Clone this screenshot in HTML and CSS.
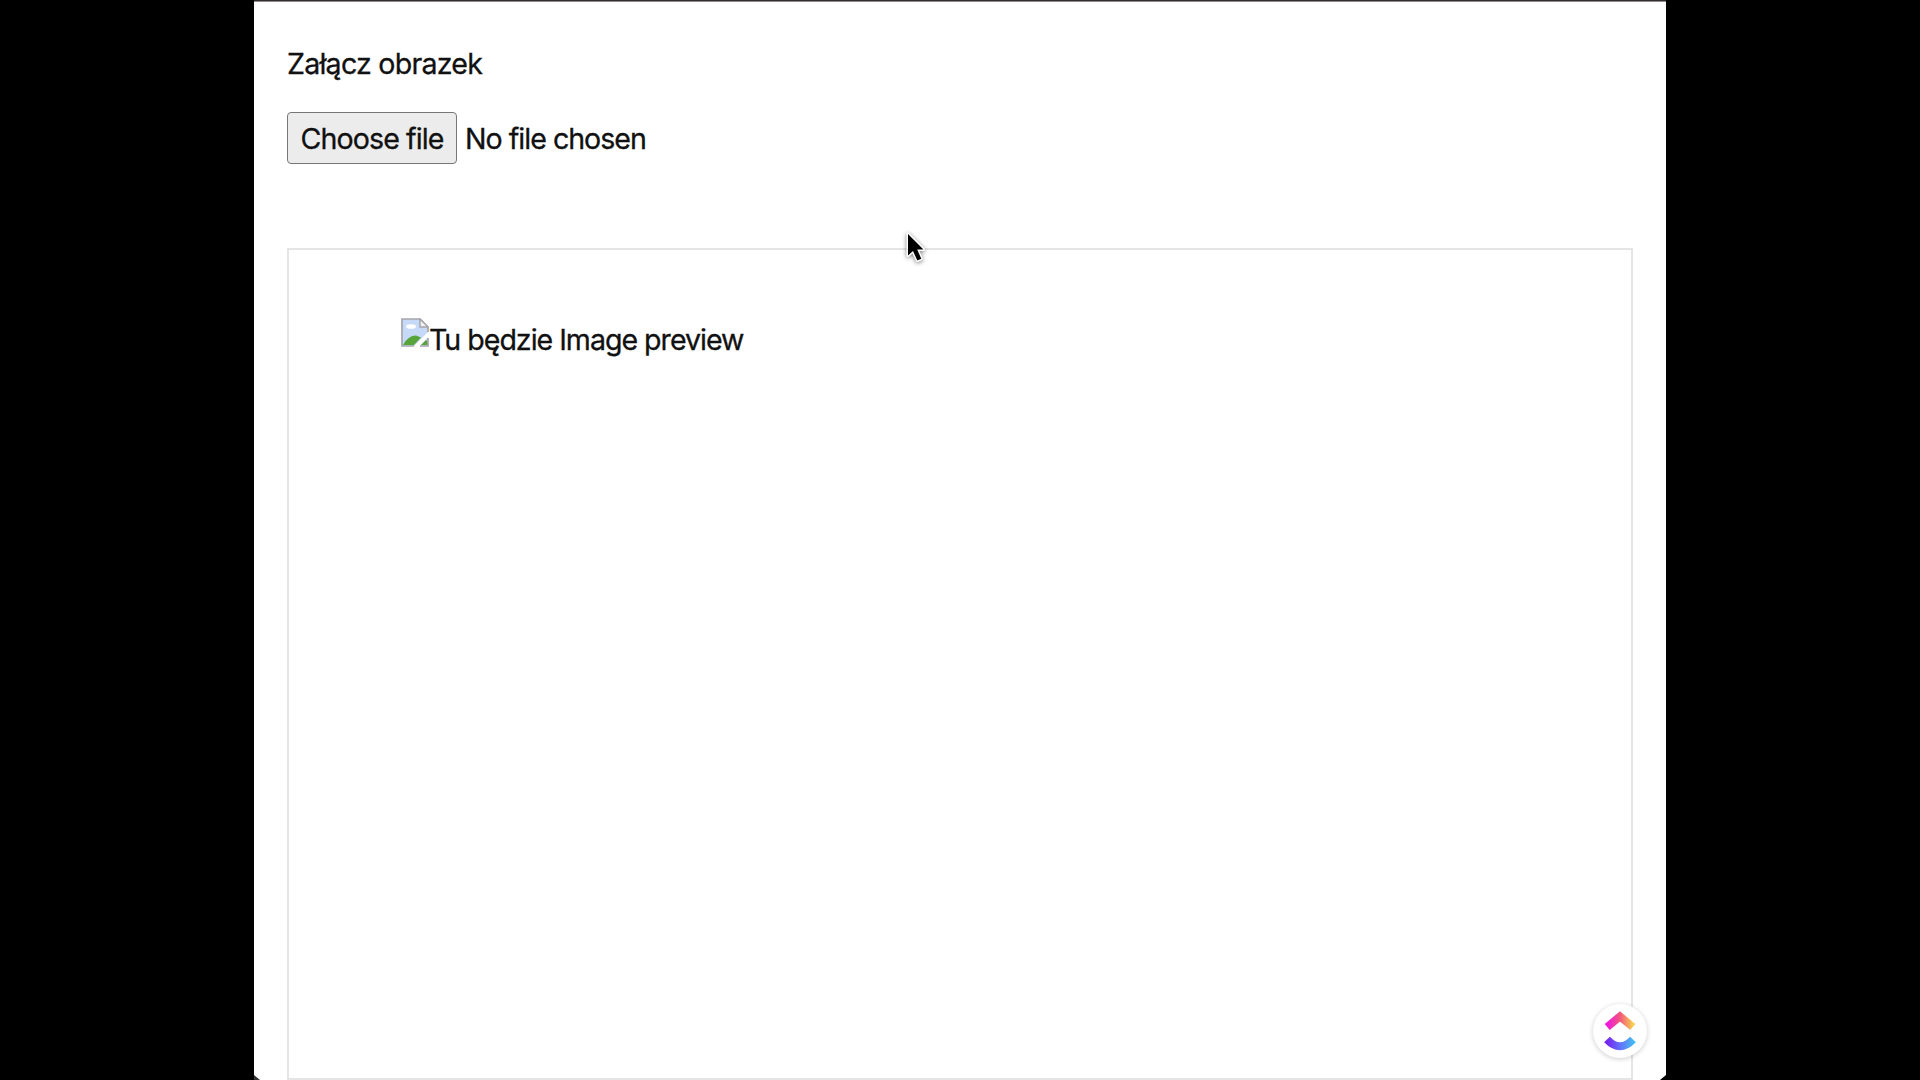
FILE: index.html
```html
<!DOCTYPE html>
<html lang="pl">
<head>
<meta charset="utf-8">
<title>Załącz obrazek</title>
<link rel="stylesheet" href="styles.css">
</head>
<body>
<main class="page">
  <div class="label"><span class="label-text">Załącz obrazek</span></div>
  <div class="file-row">
    <button class="file-button" type="button"><span class="button-text">Choose file</span></button>
    <span class="file-name">No file chosen</span>
  </div>
  <section class="preview">
    <svg class="broken" viewBox="0 0 28 29">
      <path d="M1 1H19L27 9V28H1Z" fill="#c6d9f6"/>
      <ellipse cx="10" cy="8.5" rx="5" ry="2.3" fill="#fff"/>
      <path d="M2 27Q7 17.500 15 17.500L20 19.500L13 27Z" fill="#56a43a"/>
      <path d="M28 13V18L18 29H12Z" fill="#fff"/>
      <path d="M20 27L25 22L27 24V27Z" fill="#56a43a"/>
      <path d="M13 28H1V1H19L27 9V14M19 28H27V20" fill="none" stroke="#a5a5ac" stroke-width="1.7"/>
      <path d="M19 1V9H27Z" fill="#f2f2f4" stroke="#a5a5ac" stroke-width="1.5"/>
    </svg>
    <span class="alt">Tu będzie Image preview</span>
  </section>
  <span class="corner corner-left"></span>
  <span class="corner corner-right"></span>
  <div class="badge">
    <svg class="badge-logo" viewBox="0 0 32 40">
      <defs>
        <linearGradient id="warm"><stop offset="0" stop-color="#ee18df"/><stop offset=".5" stop-color="#f2577c"/><stop offset="1" stop-color="#f6cf52"/></linearGradient>
        <linearGradient id="cool"><stop offset="0" stop-color="#7424ef"/><stop offset=".5" stop-color="#6470fb"/><stop offset="1" stop-color="#45b9ef"/></linearGradient>
      </defs>
      <path d="M3.2 16L16 5.5L28.800 16" fill="none" stroke="url(#warm)" stroke-width="8"/>
      <path d="M3 28.500Q16 42 29 28.500" fill="none" stroke="url(#cool)" stroke-width="8"/>
    </svg>
  </div>
  <svg class="cursor" viewBox="0 0 22 34">
    <path d="M3 3V24.5L8 20L12.3 29.5L16.3 27.8L12.2 18.5H18.5Z" fill="#000" stroke="#fff" stroke-width="3" stroke-linejoin="round" paint-order="stroke"/>
  </svg>
</main>
</body>
</html>
```
FILE: styles.css
```css
* { box-sizing: border-box; }

body {
  margin: 0;
  background: #000;
  height: 1080px;
  overflow: hidden;
  color: #111;
  font: 28.6px/40px Inter, "Liberation Sans", sans-serif;
  -webkit-text-stroke: 0.3px #111;
  white-space: nowrap;
}

.page {
  position: relative;
  width: 1412px;
  height: 1080px;
  margin: 0 auto;
  padding: 43px 33px 0 33px;
  background: #fff;
  border-top: 1px solid #332f30;
  box-shadow: inset 0 1px #8d8989;
  overflow: hidden;
}

.label { height: 68px; }
.label-text { letter-spacing: -0.78px; }

.file-row {
  display: flex;
  align-items: center;
  gap: 8px;
  height: 52px;
}

.file-button {
  width: 170px;
  height: 52px;
  padding: 2px 0 0;
  background: #ececec;
  border: 1.5px solid #777;
  border-radius: 4px;
  color: inherit;
  font: inherit;
}

.button-text { letter-spacing: -0.93px; }
.file-name { letter-spacing: -1px; padding-top: 2px; }

.preview {
  display: flex;
  align-items: flex-start;
  height: 832px;
  margin-top: 84px;
  padding: 68px 0 0 112px;
  border: 2px solid #e5e5e5;
}

.broken { width: 28px; height: 29px; }
.alt { letter-spacing: -1.02px; margin-top: 2px; }

.cursor {
  position: absolute;
  left: 651px;
  top: 230px;
  width: 22px;
  height: 34px;
  filter: drop-shadow(0 1px 2px rgba(0, 0, 0, .5));
}

.badge {
  position: absolute;
  left: 1339px;
  top: 1003px;
  width: 54px;
  height: 54px;
  display: flex;
  align-items: center;
  justify-content: center;
  border-radius: 50%;
  background: #fff;
  box-shadow: 0 1px 5px rgba(0, 0, 0, .2);
}

.badge-logo { width: 32px; height: 40px; }

.corner {
  position: absolute;
  bottom: 0;
  width: 6px;
  height: 5px;
  background: #333;
}

.corner-left { left: 0; clip-path: polygon(0 0, 100% 100%, 0 100%); }
.corner-right { right: 0; clip-path: polygon(100% 0, 100% 100%, 0 100%); background: #000; }
```
